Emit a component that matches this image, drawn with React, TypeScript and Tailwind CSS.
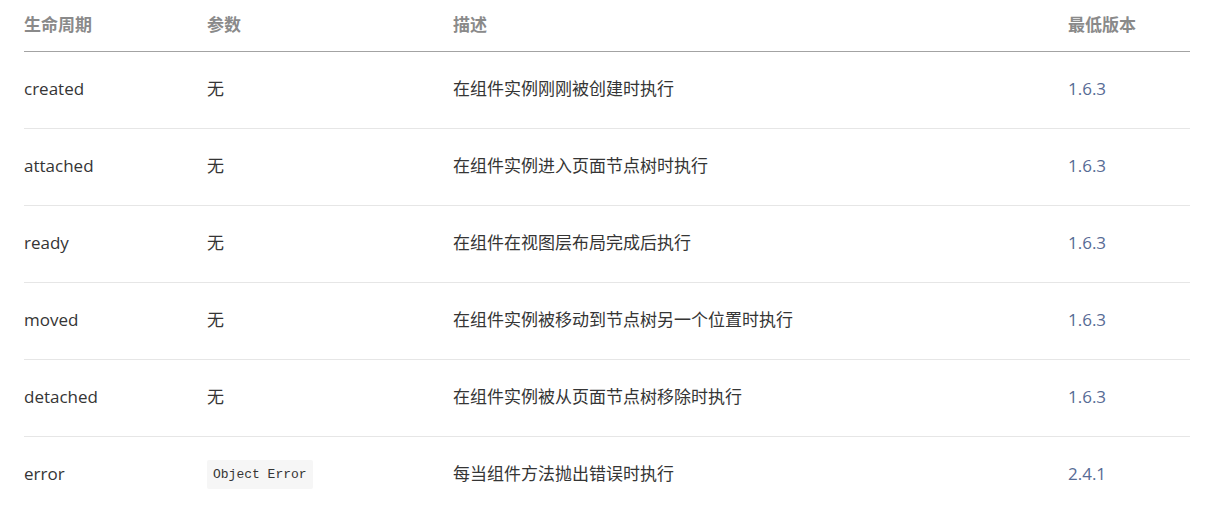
const rows = [
  { name: "created", param: "无", desc: "在组件实例刚刚被创建时执行", ver: "1.6.3" },
  { name: "attached", param: "无", desc: "在组件实例进入页面节点树时执行", ver: "1.6.3" },
  { name: "ready", param: "无", desc: "在组件在视图层布局完成后执行", ver: "1.6.3" },
  { name: "moved", param: "无", desc: "在组件实例被移动到节点树另一个位置时执行", ver: "1.6.3" },
  { name: "detached", param: "无", desc: "在组件实例被从页面节点树移除时执行", ver: "1.6.3" },
  { name: "error", param: "Object Error", desc: "每当组件方法抛出错误时执行", ver: "2.4.1", code: true },
];

export default function App() {
  return (
    <div
      className="min-h-screen bg-white pl-[24px] pr-[26px] text-[17px] text-[#353535]"
      style={{ fontFamily: '"Open Sans", "Noto Sans CJK SC", sans-serif' }}
    >
      <table className="w-full table-fixed border-collapse">
        <colgroup>
          <col className="w-[183px]" />
          <col className="w-[246px]" />
          <col className="w-[615px]" />
          <col />
        </colgroup>
        <thead>
          <tr className="h-[51px] border-b border-[#a3a3a3]">
            <th className="pb-[2px] text-left font-bold text-[#8a8a8a]">生命周期</th>
            <th className="pb-[2px] text-left font-bold text-[#8a8a8a]">参数</th>
            <th className="pb-[2px] text-left font-bold text-[#8a8a8a]">描述</th>
            <th className="pb-[2px] text-left font-bold text-[#8a8a8a]">最低版本</th>
          </tr>
        </thead>
        <tbody>
          {rows.map((r) => (
            <tr key={r.name} className="h-[77px] border-b border-[#e6e6e6]">
              <td className="pb-[1px]">{r.name}</td>
              <td className="pb-[1px]">
                {r.code ? (
                  <code
                    className="inline-block rounded-[2px] bg-[#f6f6f6] px-[6px] py-[6px] text-[13px] leading-[17px] text-[#353535]"
                    style={{ fontFamily: '"Liberation Mono", monospace' }}
                  >
                    {r.param}
                  </code>
                ) : (
                  r.param
                )}
              </td>
              <td className="pb-[1px]">{r.desc}</td>
              <td className="pb-[1px] text-[#576b95]">{r.ver}</td>
            </tr>
          ))}
        </tbody>
      </table>
    </div>
  );
}
